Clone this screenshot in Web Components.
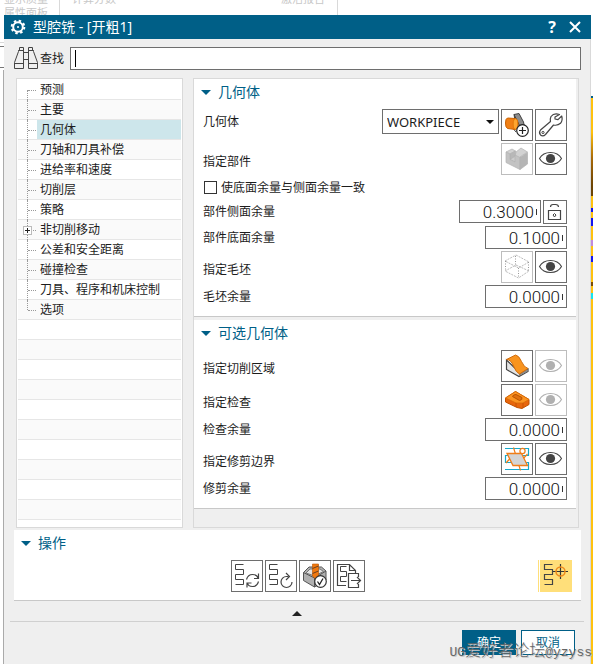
<!DOCTYPE html>
<html lang="zh-CN">
<head>
<meta charset="utf-8">
<title>型腔铣 - [开粗1]</title>
<style>
  html, body { margin: 0; height: 100%; }
  body {
    font: 12px/16px "Noto Sans", "Noto Sans CJK SC", sans-serif;
    color: #1c1c1c;
    background: #fff;
    overflow: hidden;
    --blue: #005f87;
    --face: #efefef;
    --edge: #d9d9d9;
    --ink: #6e6e6e;
  }
</style>
</head>
<body>
<cam-desktop>
  <cam-dialog heading="型腔铣 - [开粗1]">
    <cam-search slot="search" label="查找"></cam-search>
    <cam-tree slot="nav">
      <cam-tree-item>预测</cam-tree-item>
      <cam-tree-item>主要</cam-tree-item>
      <cam-tree-item selected>几何体</cam-tree-item>
      <cam-tree-item>刀轴和刀具补偿</cam-tree-item>
      <cam-tree-item>进给率和速度</cam-tree-item>
      <cam-tree-item>切削层</cam-tree-item>
      <cam-tree-item>策略</cam-tree-item>
      <cam-tree-item branch>非切削移动</cam-tree-item>
      <cam-tree-item>公差和安全距离</cam-tree-item>
      <cam-tree-item>碰撞检查</cam-tree-item>
      <cam-tree-item>刀具、程序和机床控制</cam-tree-item>
      <cam-tree-item last>选项</cam-tree-item>
    </cam-tree>
    <cam-section slot="main" heading="几何体">
      <cam-choice label="几何体" value="WORKPIECE">
        <cam-button icon="workpiece" label="新建几何体"></cam-button>
        <cam-button icon="wrench" label="编辑"></cam-button>
      </cam-choice>
      <cam-row label="指定部件">
        <cam-button icon="part" label="指定部件" off></cam-button>
        <cam-button icon="eye" label="显示"></cam-button>
      </cam-row>
      <cam-check label="使底面余量与侧面余量一致"></cam-check>
      <cam-number label="部件侧面余量" value="0.3000"><cam-button icon="lock" label="锁定" small></cam-button></cam-number>
      <cam-number label="部件底面余量" value="0.1000"></cam-number>
      <cam-row label="指定毛坯">
        <cam-button icon="blank" label="指定毛坯" off></cam-button>
        <cam-button icon="eye" label="显示"></cam-button>
      </cam-row>
      <cam-number label="毛坯余量" value="0.0000"></cam-number>
    </cam-section>
    <cam-section slot="main" heading="可选几何体">
      <cam-row label="指定切削区域">
        <cam-button icon="area" label="指定切削区域"></cam-button>
        <cam-button icon="eye" label="显示" off></cam-button>
      </cam-row>
      <cam-row label="指定检查">
        <cam-button icon="check" label="指定检查"></cam-button>
        <cam-button icon="eye" label="显示" off></cam-button>
      </cam-row>
      <cam-number label="检查余量" value="0.0000"></cam-number>
      <cam-row label="指定修剪边界">
        <cam-button icon="trim" label="指定修剪边界"></cam-button>
        <cam-button icon="eye" label="显示"></cam-button>
      </cam-row>
      <cam-number label="修剪余量" value="0.0000"></cam-number>
    </cam-section>
    <cam-section slot="actions" heading="操作">
      <cam-toolbar>
        <cam-button icon="generate" label="生成"></cam-button>
        <cam-button icon="replay" label="重播"></cam-button>
        <cam-button icon="verify" label="确认"></cam-button>
        <cam-button icon="list" label="列表"></cam-button>
        <cam-button slot="end" icon="target" label="显示刀轨" lit></cam-button>
      </cam-toolbar>
    </cam-section>
  </cam-dialog>
</cam-desktop>

<script>
const STEPS = 'M11.500 3.500H3.500V8.500H11.500V13.500H3.500V18.500H11.500V23.500H3.500';
const ICONS = {
  eye: `<path d="M3.500 14.500C8 6.500 21 6.500 25.500 14.500C21 22.500 8 22.500 3.500 14.500Z" fill="#fff" stroke="#444" stroke-width="1.1"/><circle cx="14.500" cy="14.500" r="4.600" fill="#444"/>`,
  workpiece: `<path d="M12 4.500L17 3.500 21.500 12 22.500 17 17 22 13.500 13Z" fill="#8d8d8d" stroke="#444"/><path d="M12 4.500L18.500 17.500 17 22M13 9L11.500 12V19L14 22" fill="none" stroke="#444"/><path d="M5.500 8Q3.500 8.500 3.500 13T5.500 18.500L13.500 19.500Q16 17.500 16 13.500T13.500 8.500Z" fill="#f07f14" stroke="#c96000"/><ellipse cx="13.500" cy="14" rx="2.300" ry="5.300" fill="#ffa52e" stroke="#d97000" stroke-width=".7"/><circle cx="20.500" cy="20.500" r="5.800" fill="#fff" stroke="#222" stroke-width="1.200"/><path d="M17 20.500H24M20.500 17V24" stroke="#222" stroke-width="1.200"/>`,
  wrench: `<path d="M23.500 4.500Q18 2.500 15 6.500Q13.800 9 14.500 11.500L4.500 20Q2.500 22.500 4.500 25Q7 27 9.500 24.500L17.500 15Q21.500 16 24.500 13.300Q27 10.500 25.700 6L22 9.700 19 9 19 7Z" fill="none" stroke="#444" stroke-width="1.200" stroke-linejoin="round"/><circle cx="7" cy="22.500" r="1.100" fill="none" stroke="#444"/>`,
  part: `<g stroke="#b2b2b2" stroke-width=".7" stroke-linejoin="round"><path d="M4 8L10 5 13.500 7 8 10Z" fill="#d2d2d2"/><path d="M8 10L13.500 7V12L8 15.500Z" fill="#b8b8b8"/><path d="M8 15.500L13.500 12 18 10V14L13 18Z" fill="#cdcdcd"/><path d="M13 12.500L14 8 19 4 25.500 8 18.500 12.500V15Z" fill="#d2d2d2"/><path d="M4 8L8 10V15.500L13 18V11L18 13.500V25.500L4 18.500Z" fill="#c3c3c3"/><path d="M18 13.500L25.500 8.500V20L18 25.500Z" fill="#b5b5b5"/></g>`,
  blank: `<g fill="none" stroke="#bcbcbc"><path d="M14 3L27 10 16.500 16 3 9Z" stroke-dasharray="2 1"/><path d="M14 13L27 19 16.500 26 3 19Z" stroke-dasharray="2 1"/><path d="M3.500 9V19M26.500 10V19M13.500 4V13M16.500 16V26" stroke-dasharray="1 1.500" stroke="#999"/></g>`,
  area: `<path d="M4.500 9V18.500L17 25.500 26 20.500V18L18 22Z" fill="#e4e4e4" stroke="#444" stroke-width="1.200"/><path d="M17 25V22.500L25.500 18V20.500Z" fill="#888"/><path d="M4.500 8.500L13.500 4Q17 4.500 19.500 10.500T26 17.500L17.500 23Q14 21.500 11.500 15T4.500 8.500Z" fill="#f8941f" stroke="#d06c0c"/>`,
  check: `<path d="M3.500 13L13.500 6.500 27 14.500V19.500L20 23.500 15 22.500 3.500 17Z" fill="#e8660c" stroke="#c25200"/><path d="M3.500 13L13.500 6.500 27 14.500 21 18 14 18Z" fill="#fb9422" stroke="#d56a08" stroke-width=".8"/><path d="M10.500 11.500Q11 9.500 14 9.500L20 12.500Q20.500 15 17.500 15.500Z" fill="#e0700f" stroke="#b85300"/><path d="M14 18V22M21 18V23" stroke="#c25200" stroke-width=".8"/>`,
  trim: `<path d="M3 4.500H26.500V11.500H3.500V18.500H26.500V25.500H3" fill="none" stroke="#15a8cb" stroke-width="1.200"/><path d="M11.500 3.500L18.500 26.500M25.500 10L19 17M12 10L4 19" stroke="#ef7d18" stroke-width="1.200"/><path d="M5 9.500H19.500L25.500 21.500H11Z" fill="#d4d4d4" stroke="#ef7d18" stroke-width="1.300"/><circle cx="20.500" cy="7" r="2.600" fill="#fff" stroke="#ef7d18" stroke-width="1.200"/>`,
  lock: `<path d="M4.500 9.500H16.500V18.500H4.500Z" fill="none" stroke="#444" stroke-width="1.200"/><path d="M6.500 6Q6.500 3.500 9 3.500H11.500Q14.500 3.500 14.500 6" fill="none" stroke="#444" stroke-width="1.200"/><path d="M10.500 12.500L12 14 10.500 16 9 14Z" fill="none" stroke="#444"/>`,
  generate: `<path d="${STEPS}" fill="none" stroke="#444"/><path d="M14.500 18.500Q16 13.500 20.500 13.500T26 17M26.500 12.500V17.500H22M26.500 20.500Q25 25.500 20.500 25.500T15.500 22M15 26.500V22H19.500" fill="none" stroke="#444" stroke-width="1.200"/>`,
  replay: `<path d="${STEPS}" fill="none" stroke="#444"/><path d="M22.500 15.500H20.500A5.500 5.500 0 1 0 26 21M20 12L23.500 15.500 20 19" fill="none" stroke="#444" stroke-width="1.200"/>`,
  verify: `<path d="M3.500 11.500L9 6H21.500L26 10V19L14.500 26 3.500 19.500Z" fill="#b0b0b0" stroke="#555"/><path d="M3.500 11.500L14.500 17 26 10M14.500 17V26" fill="none" stroke="#555"/><path d="M6 12L10 8H20L23.500 10.500 14.500 15Z" fill="#e3e3e3" stroke="#777"/><path d="M12.500 3H18.500V15L15.500 18 12.500 15Z" fill="#f0780f" stroke="#b95400" stroke-width=".6"/><path d="M12.500 7.500L18.500 5M12.500 12.500L18.500 10" stroke="#6b4020"/><circle cx="20.500" cy="20.500" r="5.800" fill="#fff" stroke="#333" stroke-width="1.200"/><path d="M17.500 20.500L19.500 23.500 23 17.500" fill="none" stroke="#222" stroke-width="1.300"/>`,
  list: `<path d="M12 24.500H3.500V3.500H15.500L21.500 9.500V12M15.500 3.500V9.500H21.500" fill="none" stroke="#444" stroke-width="1.200"/><path d="M12.500 5.500H6.500V10.500H12.500V15.500H6.500V20.500H12.500" fill="none" stroke="#444"/><path d="M24.500 16V12.500H14.500V26.500H24.500V23M17 19.500H26.500M23 16L26.500 19.500 23 23" fill="none" stroke="#444" stroke-width="1.200"/>`,
  target: `<g transform="translate(1 1)"><path d="${STEPS}" fill="none" stroke="#444" stroke-width="1.200"/><path d="M12 10.500H27M19.500 3V18" stroke="#333" stroke-width="1.200"/><circle cx="19.500" cy="10.500" r="4.500" fill="none" stroke="#ee8a1b" stroke-width="1.500"/></g>`
};
const svg = (name, w) => `<svg viewBox="0 0 ${w} ${w}" width="${w}" height="${w}" aria-hidden="true">${ICONS[name]}</svg>`;

class Base extends HTMLElement {
  connectedCallback() {
    if (!this.shadowRoot) this.attachShadow({ mode: 'open' }).innerHTML =
      `<style>:host,*{box-sizing:border-box} svg{display:block} ${this.css()}</style>${this.html()}`;
  }
  attr(n) { return this.getAttribute(n) || ''; }
}
const define = (tag, css, html) => customElements.define(tag, class extends Base {
  css() { return css; }
  html() { return html(this); }
});

define('cam-desktop', `
  :host { display: flex; flex-direction: column; height: 100vh; overflow: hidden; }
  .ribbon { flex: none; height: 15px; display: flex; overflow: hidden; color: #c8c8c8; font-size: 11px; line-height: 14px; }
  .group { display: flex; flex-direction: column; justify-content: flex-start; height: 28px; margin-top: -8px; padding-left: 4px; border-right: 1px solid var(--edge); }
  .one { width: 60px; } .two { width: 278px; flex-direction: row; justify-content: space-between; padding: 0 12px; }
  .view { flex: 1; min-height: 0; display: grid; grid-template-columns: 4px minmax(0, 1fr) 2px; }
  .left { background: linear-gradient(#fff 27px, #d9d9d9 27px 28px, #fff 28px 31px, #777 31px 32px, #fff 32px 52px, #777 52px 53px, #fff 53px); }
  .left::after { content: ""; display: block; height: calc(100% - 55px); margin-top: 55px; border-right: 1px solid #aaa; }
  .right { margin-top: 81px; background: linear-gradient(#005f87 0 2px, #ffc20e 2px 36px, #a86a08 62px, #6b4304 90px 100px, #ffc20e 100px 112px, #1414f0 112px 116px, #ffc20e 116px 122px, #1414f0 122px 130px, #ffc20e 130px 144px, #c08adf 144px 150px, #ffc20e 150px 160px, #1414f0 160px 166px, #ffc20e 166px 186px, #7a4c05 186px 190px, #ffc20e 190px 197px, #14e6f0 197px 203px, #ffc20e 203px); }
  .mark { position: absolute; right: 1px; bottom: 1px; font-size: 16px; line-height: 20px; color: #666; text-shadow: 1px 1px 0 #ccc; font-family: "Noto Sans CJK SC", sans-serif; font-weight: 300; white-space: nowrap; }
  .mark span { font-family: "Liberation Mono", monospace; font-size: 13px; }`,
  () => `<div class="ribbon"><div class="group one"><span>显示质量</span><span>属性面板</span></div><div class="group two"><span>计算分数</span><span>激活报告</span></div></div>
  <div class="view"><div class="left"></div><slot></slot><div class="right"></div></div>
  <div class="mark"><span>UG</span>爱好者论坛<span>@yzyss</span></div>`);

define('cam-dialog', `
  :host { display: flex; flex-direction: column; background: var(--face); min-width: 0; border-right: 1px solid var(--edge); }
  header { display: flex; align-items: center; height: 24px; flex: none; margin-right: -1px; padding: 0 8px 0 6px; background: var(--blue); color: #fff; }
  h1 { flex: 1; margin: 0 0 0 7px; font: inherit; font-size: 14px; line-height: 24px; }
  header button { border: 0; background: none; color: #fff; padding: 0; width: 16px; height: 20px; margin-left: 7px; display: grid; place-items: center; font: bold 16px/20px "Noto Sans", sans-serif; }
  .search { padding: 8px 9px 8px 10px; }
  .body { display: flex; gap: 10px; padding: 0 11px 0 12px; }
  ::slotted(cam-tree) { flex: 0 0 167px; }
  .panel { flex: 1; min-width: 0; border: 1px solid var(--edge); padding-right: 2px; display: flex; flex-direction: column; gap: 3px; }
  .actions { margin: 2px 9px 0 10px; }
  .fold { display: flex; justify-content: center; align-items: center; height: 21px; margin: 0 6px; padding: 5px 0 0; border: 0; border-bottom: 1px solid #d0d0d0; background: none; }
  .fold i { border: 5px solid transparent; border-top: 0; border-bottom-color: #222; }
  footer { display: flex; justify-content: flex-end; gap: 5px; padding: 8px 15px; }
  footer button { width: 54px; height: 25px; padding: 0; border: 1px solid var(--blue); background: #fff; color: var(--blue); font: inherit; }
  footer .ok { background: var(--blue); color: #fff; }`,
  e => `<header><svg width="16" height="16" viewBox="0 0 16 16" fill="none" stroke="#fff"><circle cx="8" cy="8" r="4.800" stroke-width="2"/><circle cx="8" cy="8" r="6.300" stroke-width="2" stroke-dasharray="2.470 2.470"/><circle cx="8" cy="8" r="1" fill="#fff" stroke="none"/></svg>
  <h1>${e.attr('heading')}</h1><button aria-label="帮助">?</button><button aria-label="关闭"><svg width="12" height="12" viewBox="0 0 12 12" stroke="#fff" stroke-width="2"><path d="M1 1L11 11M11 1L1 11"/></svg></button></header>
  <div class="search"><slot name="search"></slot></div>
  <div class="body"><slot name="nav"></slot><div class="panel"><slot name="main"></slot></div></div>
  <div class="actions"><slot name="actions"></slot></div>
  <button class="fold" aria-label="收起"><i></i></button>
  <footer><button class="ok">确定</button><button>取消</button></footer>`);

define('cam-search', `
  :host { display: block; }
  label { display: flex; align-items: center; }
  span { width: 32px; padding-left: 2px; }
  input { flex: 1; min-width: 0; height: 23px; border: 1px solid var(--ink); background: #fff; padding: 0 4px; font: inherit; outline: 0; }
  div { flex: 1; display: flex; position: relative; }
  i { position: absolute; left: 5px; top: 3px; width: 1px; height: 17px; background: #000; }`,
  e => `<label><svg width="24" height="23" viewBox="0 0 24 23" fill="none" stroke="#444"><path d="M.5 21.500V15.500L4.500 4.500V3.500H5.500V.5H9.500V21.500ZM14.500 21.500V.5H18.500V3.500H19.500V4.500L23.500 15.500V21.500ZM4.500 3.500H9.500M14.500 3.500H19.500M.5 16.500H9.500M14.500 16.500H23.500M9.500 5.500H14.500M9.500 12.500H14.500"/></svg>
  <span>${e.attr('label')}</span><div><input type="text" aria-label="${e.attr('label')}"><i></i></div></label>`);

define('cam-tree', `
  :host { display: block; background: #fff; border: 1px solid var(--edge); padding: 1px 1px 7px; }
  .blank { height: 20px; border-bottom: 1px solid #e6e6e6; }
  .blank:nth-of-type(even) { background: #fafafa; }
  ::slotted(:nth-child(even)) { background: #fafafa; }`,
  () => `<slot></slot>${'<div class="blank"></div>'.repeat(10)}`);

define('cam-tree-item', `
  :host { display: flex; height: 20px; border-bottom: 1px solid #e6e6e6; }
  .rail { flex: none; width: 19px; position: relative; }
  .rail::before { content: ""; position: absolute; left: 9px; top: 0; height: 20px; border-left: 1px dotted #999; }
  .rail::after { content: ""; position: absolute; left: 10px; right: 1px; top: 10px; border-top: 1px dotted #999; }
  :host(:first-child) .rail::before { top: 10px; height: 10px; }
  :host([last]) .rail::before { height: 10px; }
  i { position: absolute; z-index: 1; left: 5px; top: 6px; width: 9px; height: 9px; border: 1px solid #bbb; background: linear-gradient(#222, #222) center/5px 1px no-repeat, linear-gradient(#222, #222) center/1px 5px no-repeat, #fff; }
  button { flex: 1; border: 0; padding: 0 3px; background: none; font: inherit; line-height: 19px; color: inherit; text-align: left; white-space: nowrap; }
  :host([selected]) button { background: #cde6eb; }`,
  e => `<span class="rail">${e.hasAttribute('branch') ? '<i></i>' : ''}</span><button><slot></slot></button>`);

define('cam-section', `
  :host { display: block; background: #fff; border-bottom: 1px solid #c8c8c8; padding: 0 9px 8px; }
  h2 { margin: 0 0 4px; height: 26px; display: flex; align-items: center; gap: 7px; font: inherit; font-size: 14px; color: var(--blue); }
  h2::before { content: ""; border: 5px solid transparent; border-bottom: 0; border-top-color: var(--blue); margin-left: -2px; }
  .rows { display: flex; flex-direction: column; gap: 2px; }`,
  e => `<h2>${e.attr('heading')}</h2><div class="rows"><slot></slot></div>`);

const line = `:host { display: flex; gap: 2px; align-items: flex-start; } label, .label { flex: 1; white-space: nowrap; }`;
define('cam-row', `${line} .label { line-height: 38px; height: 32px; }`,
  e => `<span class="label">${e.attr('label')}</span><slot></slot>`);

define('cam-choice', `${line} label { line-height: 25px; }
  div { position: relative; }
  div::after { content: ""; position: absolute; right: 5px; top: 11px; border: 4px solid transparent; border-bottom: 0; border-top-color: #111; pointer-events: none; }
  select { appearance: none; width: 117px; height: 25px; border: 1px solid var(--ink); border-radius: 0; background: #fff; padding: 0 4px; font: inherit; font-size: 13px; color: inherit; }`,
  e => `<label for="f">${e.attr('label')}</label><div><select id="f"><option>${e.attr('value')}</option></select></div><slot></slot>`);

define('cam-number', `${line} label { line-height: 24px; height: 23px; }
  input { width: 82px; height: 23px; border: 1px solid var(--ink); border-radius: 0; padding: 0 6px; text-align: right; color: #111; font: 300 17px/21px Roboto, sans-serif; background: linear-gradient(#333, #333) right 3px top 8px / 1px 6px no-repeat #fff; }`,
  e => `<label for="f">${e.attr('label')}</label><input id="f" type="text" value="${e.attr('value')}"><slot></slot>`);

define('cam-check', `:host { display: block; }
  label { display: flex; align-items: center; gap: 4px; height: 21px; padding-left: 1px; }
  input { appearance: none; width: 13px; height: 13px; margin: 0; border: 1px solid #333; background: #fff; }`,
  e => `<label><input type="checkbox"><span>${e.attr('label')}</span></label>`);

define('cam-toolbar', `:host { display: grid; grid-template-columns: 1fr auto 1fr; align-items: center; }
  .mid { grid-column: 2; display: flex; gap: 2px; } .end { display: flex; justify-content: flex-end; }`,
  () => `<div class="mid"><slot></slot></div><div class="end"><slot name="end"></slot></div>`);

define('cam-button', `:host { display: block; }
  button { display: grid; place-items: center; width: 32px; height: 32px; padding: 0; border: 1px solid var(--ink); border-radius: 0; background: #fff; }
  :host([off]) button { border-color: #bdbdbd; }
  :host([off][icon=eye]) svg { opacity: .42; }
  :host([small]) button { width: 24px; height: 24px; }
  :host([lit]) button { width: 34px; border: 0; background: linear-gradient(90deg, #ffdf7a 1px, #fff 1px 2px, #ffdf7a 2px); padding-left: 2px; }`,
  e => `<button aria-label="${e.attr('label')}">${svg(e.attr('icon'), e.hasAttribute('small') ? 22 : e.hasAttribute('lit') ? 32 : 30)}</button>`);
</script>
</body>
</html>
